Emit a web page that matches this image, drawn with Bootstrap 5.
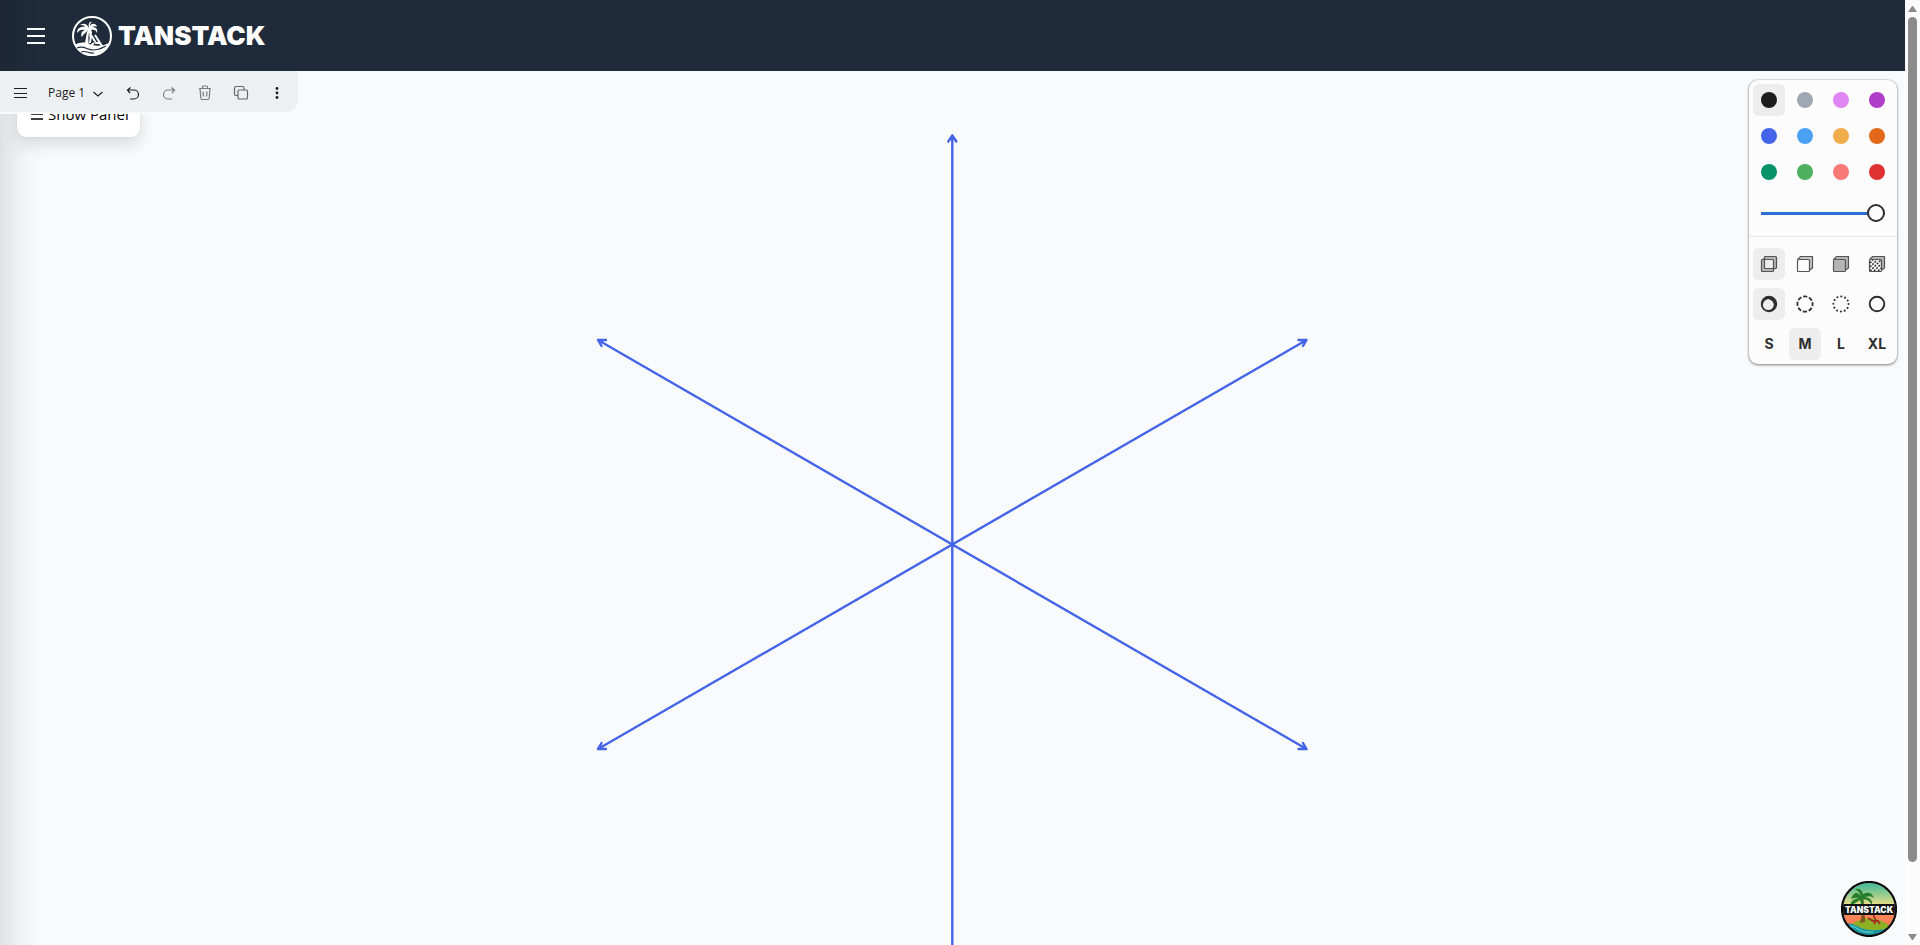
<!DOCTYPE html>
<html lang="en">
<head>
<meta charset="utf-8">
<meta name="viewport" content="width=device-width, initial-scale=1">
<title>TanStack drawing</title>
<link href="https://cdn.jsdelivr.net/npm/bootstrap@5.3.0/dist/css/bootstrap.min.css" rel="stylesheet">
<style>
body{background:#f9fafc;font-family:"Open Sans","Noto Sans",sans-serif;color:#1d1d1d}
button{padding:0;border:0;background:transparent;color:inherit}
svg{display:block}
.top-bar{height:71px;padding-left:21px;background:#1f2a3a;color:#fff}
.menu-btn{width:30px;height:30px;margin-right:21px}
.brand-text{margin-left:6px;font:900 26px/40px Inter,sans-serif}
.board{background:#f9fafc}
.drawer-shade{width:48px;background:linear-gradient(90deg,#0000001a,#0000000a 38%,#00000003 65%,transparent);pointer-events:none}
.tool-bar{height:43px;width:300px;padding-top:2px;background:#edf0f3;background-clip:padding-box;border:solid #f9fafc;border-width:0 2px 2px 0;border-radius:0 0 13px 0;z-index:3}
.tool-bar button{height:39px;width:36px}
.tool-bar .first-btn{width:40px}
.tool-bar .page-btn{width:75px;padding:0 8px;font-size:12px}
.faded{opacity:.55}
.show-panel{left:17px;top:22px;height:44px;width:123px;padding:0 0 2px 13px;border-radius:9px;background:#fff;box-shadow:0 8px 16px #0000001f,0 0 2px #00000018;font-size:15px;line-height:24px;color:#000;z-index:2}
.style-panel{top:9px;right:8px;width:148px;border-radius:9px;background:#fcfcfc;box-shadow:0 1px 3px #00000070,0 0 2px #00000040;z-index:3}
.picks{display:grid;grid-template-columns:repeat(4,32px);gap:4px;padding:4px}
.picks.wide-rows{row-gap:8px;padding-top:11px;border-top:1px solid #e5e5e6}
.picks button{height:32px;border-radius:6px;font:700 14px/32px Inter,sans-serif;color:#2e2e2e}
.picks button.on{background:#ededed}
.picks svg{margin:auto}
.fade-slider{appearance:none;display:block;width:124px;height:18px;margin:12px 12px 14px;background:linear-gradient(#2a70d4,#2a70d4) center/100% 3px no-repeat}
.fade-slider::-webkit-slider-thumb{appearance:none;width:18px;height:18px;border:2px solid #2e2e2e;border-radius:50%;background:#fcfcfc}
.corner-badge{right:8px;bottom:8px;z-index:3}
.scroll-rail{width:15px;background:#fcfcfc;padding:5px 3px 4px}
.scroll-grip{width:9px;height:845px;max-height:92%;border-radius:5px;background:#8b8b8b}
</style>
</head>
<body>
<div class="d-flex vh-100 overflow-hidden">
<div class="d-flex flex-column flex-grow-1 position-relative">
<header class="top-bar d-flex align-items-center flex-shrink-0">
<button class="menu-btn" aria-label="Menu"><svg width="30" height="30" viewBox="0 0 30 30" stroke="#fff" stroke-width="2"><path d="M6 8h18M6 15h18M6 22h18"/></svg></button>
<a href="#" class="d-flex align-items-center text-white text-decoration-none">
<svg width="40" height="40" viewBox="0 0 40 40" aria-hidden="true">
<circle cx="20" cy="20" r="19" fill="none" stroke="#fff" stroke-width="2"/>
<path d="M16 13c-2 5-2 11-4 17h5c-1-6-1-11 1-17z" fill="#fff"/>
<path d="M17 13c-1-4-4-7-9-4 2 0 4 0 5 2-4-1-8 1-8 6 2-3 5-4 8-3-3 1-5 4-3 7 1-3 4-4 6-7 1 2 2 4 1 7 3-2 4-4 2-7 3-1 5 0 6 3 1-4-1-6-5-6 2-1 4-1 5 0-1-4-5-4-7-1 0-2 1-4 2-4-3-1-4 3-3 7z" fill="#fff"/>
<path d="M19 19l5 8h5M19 19l-1 8M23 19l5 8M22 27l-4 3M28 27l2 3" fill="none" stroke="#fff" stroke-width="2"/>
<path d="M3 29c5-3 9-3 14-1s12 3 20-1c-2 7-9 13-17 13S6 36 3 29z" fill="#fff"/>
<path d="M5 32c7-3 10 2 16 2 6 0 9-2 13-4M9 36c5-2 8 2 13 1" fill="none" stroke="#1f2a3a" stroke-width="1.200"/>
</svg>
<span class="brand-text">TANSTACK</span></a>
</header>
<main class="board position-relative flex-grow-1 overflow-hidden">
<svg class="position-absolute top-0 start-0 w-100 h-100" viewBox="0 0 1905 874" preserveAspectRatio="xMidYMin meet" fill="none" stroke="#4465e9" stroke-width="2.400" stroke-linecap="round" stroke-linejoin="round">
<path d="M952.300 64.500V874M948.300 70.500l4-6 4 6M598 269L1306.500 678M606 269h-8l3.500 6M1298.500 678h8l-3.500-6M1306.500 269L598 678M1298.500 269h8l-3.500 6M606 678h-8l3.500-6"/>
</svg>
<button class="show-panel position-absolute d-flex align-items-center"><svg class="me-1" width="14" height="24" viewBox="0 0 14 24" stroke="#000" stroke-width="1.500"><path d="M1 7h12M1 12h12M1 17h12"/></svg><span>Show Panel</span></button>
<div class="tool-bar position-relative d-flex" role="toolbar">
<button class="first-btn" aria-label="Main menu"><svg class="mx-auto" width="18" height="18" viewBox="0 0 18 18" stroke="#1d1d1d"><path d="M3 4.500h13M3 9.500h13M3 13.500h13"/></svg></button>
<button class="page-btn d-flex align-items-center justify-content-between"><span>Page 1</span><svg width="18" height="18" viewBox="0 0 18 18" fill="none" stroke="#1d1d1d" stroke-width="1.100"><path d="M4.500 8l4.500 4 4.500-4"/></svg></button>
<button aria-label="Undo"><svg class="mx-auto" width="18" height="18" viewBox="0 0 18 18" fill="none" stroke="#1d1d1d" stroke-width="1.200"><path d="M6.500 3.500L3.500 6l2.500 3M3.500 6H10a4.500 4.500 0 0 1 0 9H6"/></svg></button>
<button aria-label="Redo" class="faded"><svg class="mx-auto" width="18" height="18" viewBox="0 0 18 18" fill="none" stroke="#1d1d1d" stroke-width="1.200"><path d="M11.500 3.500l3 2.500L12 9M14.500 6H8a4.500 4.500 0 0 0 0 9h4"/></svg></button>
<button aria-label="Delete" class="faded"><svg class="mx-auto" width="18" height="18" viewBox="0 0 18 18" fill="none" stroke="#1d1d1d" stroke-width="1.200"><path d="M3 4.500h12M6.500 4.500V3q0-1 1-1h3q1 0 1 1v1.500M4 4.500l.800 9.500q.200 1.500 1.500 1.500h5.400q1.300 0 1.500-1.500l.800-9.500M7 7.500l.500 5M11 7.500l-.500 5"/></svg></button>
<button aria-label="Duplicate"><svg class="mx-auto" width="18" height="18" viewBox="0 0 18 18" fill="none" stroke="#666" stroke-width="1.200"><path d="M6 11.500H4q-1.500 0-1.500-1.500V4q0-1.500 1.500-1.500h6.500q1.500 0 1.500 1.500v2"/><rect x="6" y="6" width="9.500" height="9" rx="1.300"/></svg></button>
<button aria-label="More"><svg class="mx-auto" width="18" height="18" viewBox="0 0 18 18" fill="#1d1d1d"><circle cx="9" cy="4.500" r="1.400"/><circle cx="9" cy="9" r="1.400"/><circle cx="9" cy="13.500" r="1.400"/></svg></button>
</div>
<section class="style-panel position-absolute" aria-label="Styles">
<div class="picks" id="colours"></div>
<input class="fade-slider" type="range" min="0" max="4" value="4" aria-label="Opacity">
<div class="picks wide-rows">
<button class="on" aria-label="No fill"><svg width="18" height="18" viewBox="0 0 18 18" fill="none" stroke="#555" stroke-width="1.200"><path d="M1.500 4.500l3-3h12v11l-3 4h-12z" fill="#b5b5b5" stroke="none"/><rect x="5" y="5" width="8" height="8" fill="#ededed" stroke="none"/><rect x="4.500" y="1.500" width="12" height="12" rx="1"/><rect x="1.500" y="4.500" width="12" height="12" rx="1"/></svg></button>
<button aria-label="Semi fill"><svg width="18" height="18" viewBox="0 0 18 18" fill="none" stroke="#555" stroke-width="1.200"><path d="M2 4l2.500-2.500h12v11.500l-4 3z" fill="#c5c5c5"/><rect x="1.500" y="4.500" width="12" height="12" rx="1" fill="#fcfcfc"/></svg></button>
<button aria-label="Solid fill"><svg width="18" height="18" viewBox="0 0 18 18" fill="#b5b5b5" stroke="#555" stroke-width="1.200"><path d="M2 4l2.500-2.500h12v11.500l-4 3z"/><rect x="1.500" y="4.500" width="12" height="12" rx="1"/></svg></button>
<button aria-label="Pattern fill"><svg width="18" height="18" viewBox="0 0 18 18" fill="#b5b5b5" stroke="#555" stroke-width="1.200"><path d="M2 4l2.500-2.500h12v11.500l-4 3z"/><rect x="1.500" y="4.500" width="12" height="12" rx="1" fill="#fcfcfc"/><path d="M2 8l3-3M2 12l7-7M2 16l11-11M6 16l7-7M10 16l3-3" stroke="#333" stroke-dasharray="2 1.200" stroke-width="1.600"/></svg></button>
<button class="on" aria-label="Draw"><svg width="18" height="18" viewBox="0 0 18 18"><circle cx="9" cy="9" r="8.200" fill="#2e2e2e"/><circle cx="8.300" cy="9.700" r="5.400" fill="#ededed"/><path d="M6 6l2-2 6 6-2 1z" fill="#ededed"/></svg></button>
<button aria-label="Dashed"><svg width="18" height="18" viewBox="0 0 18 18" fill="none" stroke="#2e2e2e" stroke-width="1.800"><circle cx="9" cy="9" r="7.600" stroke-dasharray="4.200 1.770" stroke-dashoffset="2.100"/></svg></button>
<button aria-label="Dotted"><svg width="18" height="18" viewBox="0 0 18 18" fill="none" stroke="#2e2e2e" stroke-width="2" stroke-linecap="round"><circle cx="9" cy="9" r="7.600" stroke-dasharray="0.100 3.880"/></svg></button>
<button aria-label="Solid"><svg width="18" height="18" viewBox="0 0 18 18" fill="none" stroke="#2e2e2e" stroke-width="1.900"><circle cx="9" cy="9" r="7.300"/></svg></button>
<button>S</button><button class="on">M</button><button>L</button><button>XL</button>
</div>
</section>
<button class="corner-badge position-absolute rounded-circle" aria-label="Open TanStack tools">
<svg width="56" height="56" viewBox="0 0 56 56">
<defs><linearGradient id="sky" x2="0" y2="1"><stop stop-color="#2eb69b"/><stop offset=".45" stop-color="#f2df83"/><stop offset=".6" stop-color="#ff8858"/><stop offset="1" stop-color="#f56a52"/></linearGradient><clipPath id="disc"><circle cx="28" cy="28" r="26"/></clipPath></defs>
<g clip-path="url(#disc)"><rect width="56" height="56" fill="url(#sky)"/>
<path d="M10 44q10-8 20-7t19 8v6H10z" fill="#8caf24"/>
<path d="M20 15q3 12-1 27l5-1q0-14-2-26z" fill="#815321"/>
<path d="M20 15q-6-7-10 3 5-2 8-1-9 1-9 9 6-5 10-7 2 5 0 8 5-4 3-9 6 0 9 6 1-7-7-8 6-2 9 1-3-8-11-4-1-6-8-5 4 2 6 7z" fill="#267d2b"/>
<path d="M27 37l5 3h6M32 33l3 7-2 3M37 40l2 3" stroke="#a52e23" stroke-width="1.800" fill="none"/>
<path d="M0 43q9-2 16 2t14 4q8 1 26-4v11H0z" fill="#1698a7"/><path d="M2 45q9-1 15 3t15 3" stroke="#75d9cb" fill="none"/>
<rect y="23" width="56" height="11" fill="#111"/></g>
<circle cx="28" cy="28" r="27" fill="none" stroke="#0b0b0b" stroke-width="2.200"/>
<text x="28" y="31.500" text-anchor="middle" font-family="Inter, sans-serif" font-weight="900" font-size="8.500" fill="#fff">TANSTACK</text>
</svg></button>
</main>
<div class="drawer-shade position-absolute top-0 start-0 h-100 z-1"></div>
</div>
<div class="scroll-rail d-flex flex-column align-items-center flex-shrink-0" aria-hidden="true">
<svg class="mb-1 flex-shrink-0" width="9" height="8" viewBox="0 0 9 8"><path d="M0 7L4 1h1l4 6z" fill="#8b8b8b"/></svg>
<div class="scroll-grip"></div>
<svg class="mt-auto flex-shrink-0" width="9" height="8" viewBox="0 0 9 8"><path d="M0 1l4 6h1l4-6z" fill="#8b8b8b"/></svg>
</div>
</div>
<script src="https://cdn.jsdelivr.net/npm/bootstrap@5.3.0/dist/js/bootstrap.bundle.min.js"></script>
<script>
const colours={Black:'#1d1d1d',Grey:'#9fa8b2','Light violet':'#e085f4',Violet:'#ae3ec9',Blue:'#4465e9','Light blue':'#4ba1f1',Yellow:'#f1ac4b',Orange:'#e16919',Green:'#099268','Light green':'#4cb05e','Light red':'#f87777',Red:'#e03131'};
document.getElementById('colours').innerHTML=Object.entries(colours).map(([name,c],i)=>`<button class="${i?'':'on'}" aria-label="${name}"><svg width="16" height="16"><circle cx="8" cy="8" r="8" fill="${c}"/></svg></button>`).join('');
</script>
</body>
</html>
